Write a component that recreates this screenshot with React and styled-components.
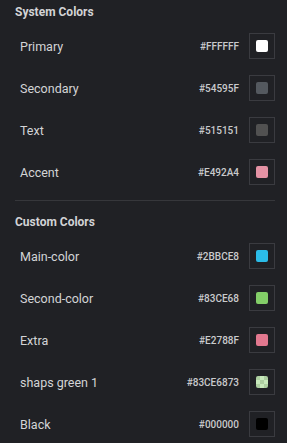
import React from 'react'
import styled, {createGlobalStyle} from 'styled-components'

const GlobalStyle = createGlobalStyle`
  html, body {
    margin: 0;
    padding: 0;
    background: #202125;
  }
  body {
    font-family: Roboto, "Liberation Sans", Arial, sans-serif;
    -webkit-font-smoothing: antialiased;
  }
`

const systemColors = [
  {name: 'Primary', hex: '#FFFFFF', color: '#FFFFFF'},
  {name: 'Secondary', hex: '#54595F', color: '#54595F'},
  {name: 'Text', hex: '#515151', color: '#515151'},
  {name: 'Accent', hex: '#E492A4', color: '#E492A4'},
]

const customColors = [
  {name: 'Main-color', hex: '#2BBCE8', color: '#2BBCE8'},
  {name: 'Second-color', hex: '#83CE68', color: '#83CE68'},
  {name: 'Extra', hex: '#E2788F', color: '#E2788F'},
  {name: 'shaps green 1', hex: '#83CE6873', color: '#83CE6873', alpha: true},
  {name: 'Black', hex: '#000000', color: '#000000'},
]

const ColorRow = ({name, hex, color, alpha}) => (
  <Row>
    <Label>{name}</Label>
    <Hex>{hex}</Hex>
    <SwatchBox>
      <Swatch $color={color} $alpha={alpha} />
    </SwatchBox>
  </Row>
)

const App = () => {
  return (
    <>
      <GlobalStyle />
      <Panel>
        <Title $top={4}>System Colors</Title>
        {systemColors.map(c => <ColorRow key={c.name} {...c} />)}
        <Divider />
        <Title $top={13}>Custom Colors</Title>
        {customColors.map(c => <ColorRow key={c.name} {...c} />)}
      </Panel>
    </>
  )
}

const Panel = styled.div`
  width: 260px;
  padding: 0 12px 0 15px;
  background: #202125;
  min-height: 443px;
  box-sizing: content-box;
`

const Title = styled.div`
  padding: ${p => p.$top}px 0 5px;
  font-size: 12px;
  line-height: 16px;
  font-weight: 700;
  color: #d2d3d5;
`

const Row = styled.div`
  display: flex;
  align-items: center;
  height: 42px;
  padding-left: 5px;
`

const Label = styled.span`
  flex: 1;
  font-size: 12.5px;
  color: #d3d4d6;
`

const Hex = styled.span`
  font-size: 10px;
  font-weight: 500;
  color: #c9cacc;
  margin-right: 10px;
`

const SwatchBox = styled.div`
  width: 26px;
  height: 26px;
  box-sizing: border-box;
  border: 1px solid #3a3b40;
  display: flex;
  align-items: center;
  justify-content: center;
`

const Swatch = styled.div`
  width: 12px;
  height: 12px;
  border-radius: 2px;
  background: ${p => p.$alpha
    ? `linear-gradient(${p.$color}, ${p.$color}), repeating-conic-gradient(#ffffff 0 25%, #cfcfcf 0 50%) 0 0 / 8px 8px`
    : p.$color};
`

const Divider = styled.div`
  height: 1px;
  margin-top: 7px;
  background: #36373b;
`

export default App
